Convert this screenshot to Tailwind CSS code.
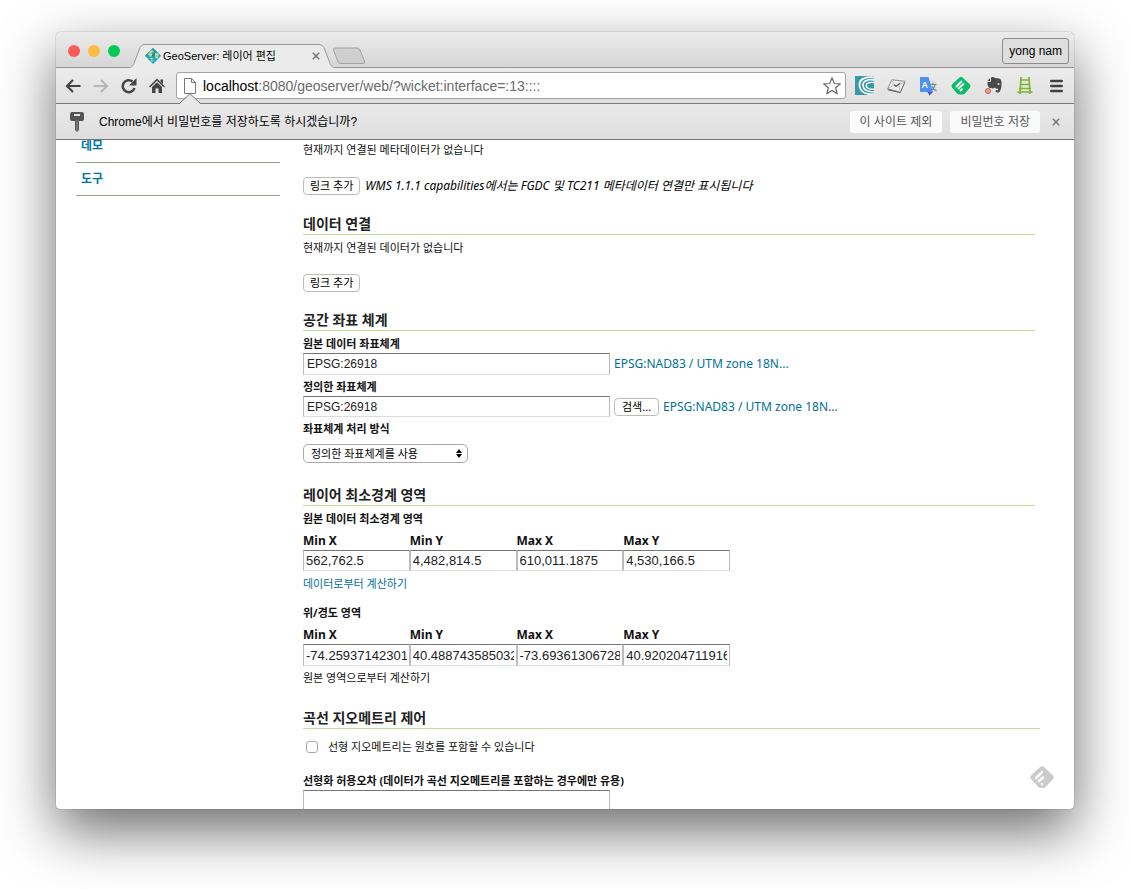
<!DOCTYPE html>
<html lang="ko">
<head>
<meta charset="utf-8">
<title>GeoServer: 레이어 편집</title>
<script src="https://cdn.jsdelivr.net/npm/@tailwindcss/browser@4"></script>
</head>
<body class="bg-white">
<div class="flex h-screen flex-col overflow-hidden px-14 pt-8 pb-20 font-['Liberation_Sans','Noto_Sans_CJK_KR',sans-serif]">
  <div class="flex min-h-0 flex-1 flex-col overflow-hidden rounded-t-[5px] rounded-b-[4px] bg-white shadow-[0_0_1px_rgba(0,0,0,0.7),0_22px_56px_rgba(0,0,0,0.58)]">

    <!-- Tab strip -->
    <header class="flex h-9 shrink-0 items-end border-b border-[#999] bg-linear-to-b from-[#ebebeb] to-[#d6d6d6]">
      <div class="flex h-full items-center gap-2 pl-3 pt-[3px]">
        <span class="size-3 rounded-full bg-[#fc5b57]"></span>
        <span class="size-3 rounded-full bg-[#fdbc40]"></span>
        <span class="size-3 rounded-full bg-[#04c956]"></span>
      </div>
      <div class="relative -mb-px ml-2 flex h-6 w-[208px] items-center pl-[17px]">
        <svg class="absolute inset-0 h-6 w-[208px]" viewBox="0 0 208 24" fill="#ebebeb"><path d="M0 24V23.500C4 23.500 5 22 6 19.500L11.500 5C13 1.500 14 .5 17 .5H190C193 .5 195 1.500 196.500 5L202 19.500C203 22 204 23.500 208 23.500V24Z"/><path d="M0 23.500C4 23.500 5 22 6 19.500L11.500 5C13 1.500 14 .5 17 .5H190C193 .5 195 1.500 196.500 5L202 19.500C203 22 204 23.500 208 23.500" fill="none" stroke="#999"/></svg>
        <svg class="relative size-4" viewBox="0 0 16 16"><path d="M8 0 16 8 8 16 0 8Z" fill="#1fb0dc"/><path d="M8 0 16 8H0Z" fill="#2595bd"/><path d="M5 3 8 2 9 4 7 6 7 8 5 9 3 7ZM10 5 13 5 14 8 12 11 10 9ZM5 10 8 10 9 12 7 14Z" fill="#cde481"/><path d="M8 1V15M3 5H13M1 8H15M4 11.500H12" stroke="#087b9b" stroke-width=".4"/></svg>
        <span class="relative ml-[2px] text-[11px] text-black">GeoServer: 레이어 편집</span>
        <button aria-label="탭 닫기" class="relative mr-4 ml-auto"><svg class="size-2" viewBox="0 0 8 8" stroke="#777" stroke-width="1.600"><path d="M.8.8 7.200 7.200M7.200.8.8 7.200"/></svg></button>
      </div>
      <button aria-label="새 탭" class="-ml-[4px] mb-[2px]"><svg class="h-[18px] w-[34px]" viewBox="0 0 34 18"><path d="M3.500 1H25Q27 1 28 3L32.500 14Q33 16.500 31 16.500H9Q7 16.500 6 14.500L1.500 3Q1 1 3.500 1Z" fill="#cfcfcf" stroke="#a2a2a2"/></svg></button>
      <button class="mr-[5px] mb-[3px] ml-auto h-[26px] rounded-[3px] border border-[#8d8d8d] bg-[#dedede] px-[6px] text-xs leading-6 text-black">yong nam</button>
    </header>

    <!-- Toolbar -->
    <nav class="flex h-9 shrink-0 items-center border-b border-[#777] bg-linear-to-b from-[#ececec] to-[#e0e0e0] pl-[9px]">
      <div class="flex items-center gap-3">
        <button aria-label="뒤로"><svg class="size-4" viewBox="0 0 16 16" fill="none" stroke="#454545" stroke-width="2.200"><path d="M15.500 8H2M8 2 2 8 8 14"/></svg></button>
        <button aria-label="앞으로"><svg class="size-4" viewBox="0 0 16 16" fill="none" stroke="#b7b7b7" stroke-width="2.200"><path d="M.5 8H14M8 2 14 8 8 14"/></svg></button>
        <button aria-label="새로고침"><svg class="size-4" viewBox="0 0 16 16"><path d="M13.500 10A6 6 0 1 1 11.500 3.500" fill="none" stroke="#454545" stroke-width="2.500"/><path d="M15.500 0V7.500H8Z" fill="#454545"/></svg></button>
        <button aria-label="홈"><svg class="size-4" viewBox="0 0 16 16" fill="#454545"><path d="M8 .5 16 8.500 15 9.500 8 2.800 1 9.500 0 8.500ZM11.500 1.500H14V6L11.500 3.600ZM3 9 8 4.200 13 9V15H9.500V10.500H6.500V15H3Z"/></svg></button>
      </div>
      <div class="ml-[11px] flex h-[27px] min-w-0 flex-1 items-center rounded-[3px] border border-[#a3a3a3] bg-white pr-1 pl-[7px]">
        <svg class="h-4 w-3 shrink-0" viewBox="0 0 12 16" fill="#fff" stroke="#777"><path d="M1 .5H7.500L11.500 4.500V15.500H.5V.5ZM7.500.5V4.500H11.500"/></svg>
        <a href="#" class="ml-[7px] flex-1 truncate text-sm leading-5 text-[#6b6b6b]"><span class="text-black">localhost</span>:8080/geoserver/web/?wicket:interface=:13::::</a>
        <button aria-label="북마크"><svg class="size-[18px]" viewBox="0 0 18 18" fill="#fff" stroke="#666" stroke-linejoin="round" stroke-width="1.200"><path d="M9 .8 11.300 6.500 17.300 6.900 12.700 10.800 14.200 16.800 9 13.500 3.800 16.800 5.300 10.800.7 6.900 6.700 6.500Z"/></svg></button>
      </div>
      <div class="flex items-center gap-[13px] pr-[11px] pl-[9px]">
        <svg class="h-[19px] w-[19px]" viewBox="0 0 19 19" fill="none" stroke="#fff"><path d="M0 0H19V19H0Z" fill="#3b98a8" stroke="none"/><path d="M19 1.500C9 0 4 4 4.500 9.500 5 15 10 18.500 19 18.500" stroke-width="1.800"/><path d="M19 4C11 3 7.500 6 8 9.500 8.500 14 13 16 19 16" stroke-width="1.600"/><path d="M19 6.500C14 6 11 7 11.200 9.500 11.500 12.500 15 13.500 19 13.200" stroke-width="1.400"/></svg>
        <svg class="h-4 w-[19px]" viewBox="0 0 20 16"><path d="M5 1.500 19 3 14 14.500.8 11Z" fill="#ededed" stroke="#8a8a8a"/><path d="M.8 11 14 14.500 19 3 18.500 6 14 15.500.8 12.500Z" fill="#666"/><path d="M5 2 9.500 8.500 18.500 3.500M1.500 11 7.500 6.500M14 13.500 12.500 7.500" stroke="#bbb" fill="none"/><path d="M7.500 6.500 9.500 8.500 13.500 5" fill="none" stroke="#555" stroke-width="1.300"/></svg>
        <svg class="h-5 w-[19px]" viewBox="0 0 19 20"><path d="M8 5H17.500V16H11Z" fill="#dcdcdc"/><path d="M11 8.500H17.500M14 7V8.500M16 9Q15 13 12 14.500M13 10.500Q14 13 17.500 15" stroke="#72899b" stroke-width="1.200" fill="none"/><path d="M1 1H9.500L14 16H1Z" fill="#4d90f0"/><path d="M8.500 16H14L10.500 19.500Z" fill="#4657bd"/><text x="2.500" y="11.500" font-size="9" font-weight="bold" fill="#fff">A</text></svg>
        <svg class="h-5 w-5" viewBox="0 0 20 20"><path d="M8.500 1.500Q10 0 11.500 1.500L19 8.500Q20 10 19 11.500L14 17.500Q13 18.500 11.500 18.500H8.500Q7 18.500 6 17.500L1 11.500Q0 10 1 8.500Z" fill="#0bbd6b"/><path d="M5.500 10.500 10.500 5.500M7.500 12.500 12.500 8M9.500 14.500 11 13.200" stroke="#fff" stroke-width="1.800" stroke-linecap="round"/></svg>
        <svg class="h-[19px] w-[19px]" viewBox="0 0 19 19"><path d="M7 1.500Q9 .5 11 2L15 2.500Q18 3 17.500 9 17 15.500 14.500 16.500 11.500 17 11.500 15 12 13.500 14 14.500L14 12.500Q12 13.500 11 11.500 9 13 7 12 3 12 3.500 6H6Q7 6 7 5Z" fill="#4a4a4a"/><path d="M3.500 5 6 2V5Z" fill="#4a4a4a"/><circle cx="14.500" cy="8" r="1" fill="#ddd"/><circle cx="4" cy="15" r="2.500" fill="#f0a092" stroke="#c9564a"/></svg>
        <svg class="h-[19px] w-[18px]" viewBox="0 0 18 19" fill="none" stroke="#7fb52a" stroke-width="1.700"><path d="M5 1 4 18M13 1 14 18M4.500 4H13.500M4 8.500H14M3 12.500H15M1.500 16H16.500"/></svg>
        <button aria-label="메뉴" class="ml-[3px]"><svg class="h-[14px] w-[13px]" viewBox="0 0 13 14" stroke="#414141" stroke-width="2.600" stroke-linecap="round"><path d="M1.300 2H11.700M1.300 7H11.700M1.300 12H11.700"/></svg></button>
      </div>
    </nav>

    <!-- Password prompt -->
    <div class="relative flex h-9 shrink-0 items-center gap-2 border-b border-[#777] bg-linear-to-b from-[#e9e9e9] to-[#dedede] pr-[14px] pl-[14px]">
      <svg class="absolute -top-[11px] left-[122px] h-3 w-6" viewBox="0 0 24 12"><path d="M0 12 1 11.500 12 .7 23 11.500 24 12Z" fill="#e9e9e9"/><path d="M0 10.500H1.500L12 .7 22.500 10.500H24" fill="none" stroke="#777"/></svg>
      <svg class="h-5 w-[14px]" viewBox="0 0 14 20" fill="#555"><path fill-rule="evenodd" d="M2 0H12Q14 0 14 2V7Q14 9 12 9H9V18L7 20 5 18V9H2Q0 9 0 7V2Q0 0 2 0ZM4 2V4H10V2Z"/><path d="M7 8V19" stroke="#999"/></svg>
      <span class="ml-[7px] text-xs text-black">Chrome에서 비밀번호를 저장하도록 하시겠습니까?</span>
      <button class="ml-auto h-[22px] rounded-[3px] bg-[#fafafa] px-[10px] text-xs leading-5 text-[#555]">이 사이트 제외</button>
      <button class="h-[22px] rounded-[3px] bg-[#fafafa] px-[10px] text-xs leading-5 text-[#555]">비밀번호 저장</button>
      <button aria-label="닫기" class="ml-1"><svg class="size-2" viewBox="0 0 8 8" stroke="#777" stroke-width="1.500"><path d="M.8.8 7.200 7.200M7.200.8.8 7.200"/></svg></button>
    </div>

    <!-- Page -->
    <div class="flex min-h-0 flex-1 gap-[23px] overflow-hidden pr-[34px] pl-5 font-['Noto_Sans','Noto_Sans_CJK_KR',sans-serif] text-[11px] leading-[18px] text-[#111]">
      <aside class="w-[204px] shrink-0 text-xs font-bold">
        <a href="#" class="block h-[23px] border-b border-[#93a38b] pl-[5px] leading-3 text-[#0076a1]">데모</a>
        <a href="#" class="block h-[33px] border-b border-[#93a38b] pl-[5px] leading-8 text-[#0076a1]">도구</a>
      </aside>
      <main class="min-w-0 flex-1">
        <section class="mr-[5px] pt-px">
          <p>현재까지 연결된 메타데이터가 없습니다</p>
          <div class="mt-[18px] flex h-[18px] items-center gap-[5px]">
            <button class="h-[18px] rounded-[4px] border border-[#bbb] bg-white px-[6px] text-[11px] leading-4 text-black">링크 추가</button>
            <em class="text-xs whitespace-nowrap text-black">WMS 1.1.1 capabilities에서는 FGDC 및 TC211 메타데이터 연결만 표시됩니다</em>
          </div>
        </section>
        <section class="mr-[5px]">
          <h2 class="mt-[18px] border-b border-[#bfdf95] text-sm leading-[21px] font-bold text-[#222]">데이터 연결</h2>
          <p class="mt-1">현재까지 연결된 데이터가 없습니다</p>
          <button class="mt-[17px] block h-[18px] rounded-[4px] border border-[#bbb] bg-white px-[6px] text-[11px] leading-4 text-black">링크 추가</button>
        </section>
        <section class="mr-[5px]">
          <h2 class="mt-[18px] border-b border-[#bfdf95] text-sm leading-5 font-bold text-[#222]">공간 좌표 체계</h2>
          <label for="native" class="mt-1 block font-bold">원본 데이터 좌표체계</label>
          <div class="flex items-center gap-1">
            <input id="native" value="EPSG:26918" class="h-[22px] w-[307px] border border-t-[#767676] border-r-[#bbb] border-b-[#ddd] border-l-[#bbb] px-[3px] font-['Liberation_Sans',sans-serif] text-xs text-[#222]">
            <a href="#" class="text-xs text-[#00709b]">EPSG:NAD83 / UTM zone 18N...</a>
          </div>
          <label for="declared" class="mt-[3px] block font-bold">정의한 좌표체계</label>
          <div class="flex items-center gap-1">
            <input id="declared" value="EPSG:26918" class="h-[21px] w-[307px] border border-t-[#767676] border-r-[#bbb] border-b-[#ddd] border-l-[#bbb] px-[3px] font-['Liberation_Sans',sans-serif] text-xs text-[#222]">
            <button class="h-[18px] rounded-[4px] border border-[#bbb] bg-white px-[7px] text-[11px] leading-4 text-black">검색...</button>
            <a href="#" class="text-xs text-[#00709b]">EPSG:NAD83 / UTM zone 18N...</a>
          </div>
          <label for="handling" class="mt-[3px] block font-bold">좌표체계 처리 방식</label>
          <div class="relative mt-[6px] h-[19px] w-[165px]">
            <select id="handling" class="h-[19px] w-full appearance-none rounded-[5px] border border-[#aaa] bg-white pl-[7px] text-[11px] leading-4 text-black"><option>정의한 좌표체계를 사용</option></select>
            <svg class="pointer-events-none absolute top-[5px] right-[6px] h-[9px] w-[6px]" viewBox="0 0 6 9"><path d="M3 0 6 4H0ZM0 5H6L3 9Z"/></svg>
          </div>
        </section>
        <section class="mr-[5px]">
          <h2 class="mt-[22px] border-b border-[#bfdf95] text-sm leading-5 font-bold text-[#222]">레이어 최소경계 영역</h2>
          <p class="mt-1 font-bold">원본 데이터 최소경계 영역</p>
          <div class="mt-1 grid w-[427px] grid-cols-4 text-xs leading-[18px] font-bold">
            <label for="n1">Min X</label><label for="n2">Min Y</label><label for="n3">Max X</label><label for="n4">Max Y</label>
            <input id="n1" value="562,762.5" class="h-[21px] w-full border border-t-[#767676] border-r-[#bbb] border-b-[#ddd] border-l-[#bbb] px-[2px] font-['Liberation_Sans',sans-serif] text-[13px] font-normal text-[#222]">
            <input id="n2" value="4,482,814.5" class="h-[21px] w-full border border-t-[#767676] border-r-[#bbb] border-b-[#ddd] border-l-[#bbb] px-[2px] font-['Liberation_Sans',sans-serif] text-[13px] font-normal text-[#222]">
            <input id="n3" value="610,011.1875" class="h-[21px] w-full border border-t-[#767676] border-r-[#bbb] border-b-[#ddd] border-l-[#bbb] px-[2px] font-['Liberation_Sans',sans-serif] text-[13px] font-normal text-[#222]">
            <input id="n4" value="4,530,166.5" class="h-[21px] w-full border border-t-[#767676] border-r-[#bbb] border-b-[#ddd] border-l-[#bbb] px-[2px] font-['Liberation_Sans',sans-serif] text-[13px] font-normal text-[#222]">
          </div>
          <a href="#" class="mt-1 block text-[#00709b]">데이터로부터 계산하기</a>
          <p class="mt-[11px] font-bold">위/경도 영역</p>
          <div class="mt-1 grid w-[427px] grid-cols-4 text-xs leading-[18px] font-bold">
            <label for="g1">Min X</label><label for="g2">Min Y</label><label for="g3">Max X</label><label for="g4">Max Y</label>
            <input id="g1" value="-74.25937142301" class="h-[22px] w-full border border-t-[#767676] border-r-[#bbb] border-b-[#ddd] border-l-[#bbb] px-[2px] font-['Liberation_Sans',sans-serif] text-[13px] font-normal text-[#222]">
            <input id="g2" value="40.488743585032" class="h-[22px] w-full border border-t-[#767676] border-r-[#bbb] border-b-[#ddd] border-l-[#bbb] px-[2px] font-['Liberation_Sans',sans-serif] text-[13px] font-normal text-[#222]">
            <input id="g3" value="-73.69361306728" class="h-[22px] w-full border border-t-[#767676] border-r-[#bbb] border-b-[#ddd] border-l-[#bbb] px-[2px] font-['Liberation_Sans',sans-serif] text-[13px] font-normal text-[#222]">
            <input id="g4" value="40.920204711916" class="h-[22px] w-full border border-t-[#767676] border-r-[#bbb] border-b-[#ddd] border-l-[#bbb] px-[2px] font-['Liberation_Sans',sans-serif] text-[13px] font-normal text-[#222]">
          </div>
          <a href="#" class="mt-[3px] block">원본 영역으로부터 계산하기</a>
        </section>
        <section>
          <h2 class="mt-[21px] border-b border-[#bfdf95] text-sm leading-5 font-bold text-[#222]">곡선 지오메트리 제어</h2>
          <label class="mt-[9px] flex items-center gap-[10px] pl-[3px]"><input type="checkbox" class="size-3 appearance-none rounded-[3px] border border-[#aaa] bg-white">선형 지오메트리는 원호를 포함할 수 있습니다</label>
          <label for="tol" class="mt-4 block font-bold">선형화 허용오차 (데이터가 곡선 지오메트리를 포함하는 경우에만 유용)</label>
          <input id="tol" class="block h-[22px] w-[307px] border border-t-[#767676] border-r-[#bbb] border-b-[#ddd] border-l-[#bbb] px-[3px]">
        </section>
      </main>
    </div>
  </div>
</div>
<!-- Floating reader button -->
<button aria-label="Feedly" class="fixed right-[76px] bottom-[101px]"><svg class="h-[22px] w-6" viewBox="0 0 24 22"><path d="M10 1Q12-.7 14 1L23 9.500Q24.500 11.500 23 13L16 20.500Q15 22 13.500 22H10.500Q9 22 8 20.500L1 13Q-.5 11.500 1 9.500Z" fill="#cbcbcb"/><path d="M6 12 12 6.200M9 15 13 11.500" stroke="#fff" stroke-width="2.500" stroke-linecap="round"/><path d="M12 16.500 13.500 18 12 19.500 10.500 18Z" fill="#fff"/></svg></button>
</body>
</html>
